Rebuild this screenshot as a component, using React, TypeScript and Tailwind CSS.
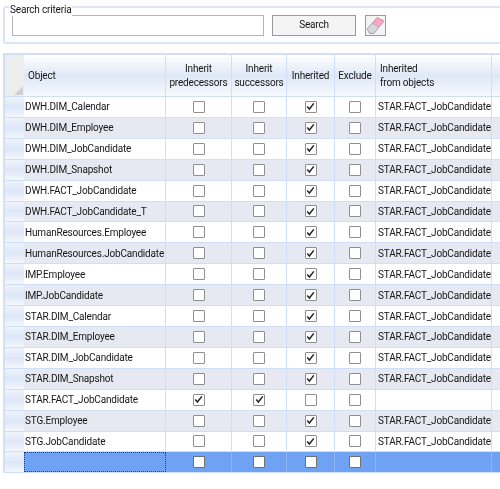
const names = [
  "DWH.DIM_Calendar", "DWH.DIM_Employee", "DWH.DIM_JobCandidate", "DWH.DIM_Snapshot",
  "DWH.FACT_JobCandidate", "DWH.FACT_JobCandidate_T", "HumanResources.Employee", "HumanResources.JobCandidate",
  "IMP.Employee", "IMP.JobCandidate", "STAR.DIM_Calendar", "STAR.DIM_Employee",
  "STAR.DIM_JobCandidate", "STAR.DIM_Snapshot", "STAR.FACT_JobCandidate", "STG.Employee", "STG.JobCandidate",
];

const COLS = "grid grid-cols-[19px_142px_66px_55px_48px_41px_116px_1fr]";

function Check({ on, sel }: { on?: boolean; sel?: boolean }) {
  return (
    <span className={`flex h-[12px] w-[12px] items-center justify-center rounded-[1px] border bg-white ${sel ? "border-[#6b6f78]" : "border-[#8f8f8f]"}`}>
      {on && (
        <svg width="9" height="9" viewBox="0 0 9 9" fill="none">
          <path d="M1.2 4.6 L3.4 7 L7.8 1.4" stroke="#222" strokeWidth="1.5" />
        </svg>
      )}
    </span>
  );
}

function BoxCell({ on, sel }: { on?: boolean; sel?: boolean }) {
  return (
    <div className={`flex items-center justify-center border-r ${sel ? "border-[#8db6f3]" : "border-[#cfdff8]"}`}>
      <Check on={on} sel={sel} />
    </div>
  );
}

function Row({ name, index }: { name: string; index: number }) {
  const self = name === "STAR.FACT_JobCandidate";
  return (
    <div className={`${COLS} h-[20.92px] border-b border-[#cfdff8] ${index % 2 ? "bg-[#e6e9f2]" : "bg-white"}`}>
      <div className="bg-gradient-to-b from-[#eef3fb] via-[#dde7f7] to-[#f4f7fc]" />
      <div className="flex items-center whitespace-nowrap border-r border-[#cfdff8] pl-[1px] pt-[1px]">{name}</div>
      <BoxCell on={self} />
      <BoxCell on={self} />
      <BoxCell on={!self} />
      <BoxCell />
      <div className="flex items-center whitespace-nowrap border-r border-[#cfdff8] pl-[2px] pt-[1px]">{self ? "" : "STAR.FACT_JobCandidate"}</div>
      <div />
    </div>
  );
}

export default function App() {
  return (
    <div className="relative h-[489px] w-[500px] overflow-hidden bg-white font-['Roboto','Noto_Sans',sans-serif] text-[10px] leading-none tracking-[-0.18px] text-[#161616] blur-[0.3px]">
      <div className="pl-[3px] pt-[6px]">
        <div className="relative flex h-[38px] items-center rounded-l-[3px] border-y-2 border-l-2 border-[#dbe5f8] pl-[7px]">
          <span className="absolute -top-[4px] left-[4px] bg-white px-[1px] leading-[12px]">Search criteria</span>
          <div className="h-[21px] w-[252px] border border-[#b4b4b4] bg-white" />
          <button className="ml-[8px] h-[21px] w-[84px] border border-[#9a9a9a] bg-[#f4f4f4]">Search</button>
          <button className="ml-[9px] flex h-[21px] w-[21px] items-center justify-center border border-[#9a9a9a] bg-[#f4f4f4]">
            <svg width="19" height="19" viewBox="0 0 17 17">
              <path d="M1 11.5 L10 1.5 L16 4.5 L7 15.8 L3 15.5 Z" fill="#d6d6d6" stroke="#9c9c9c" strokeWidth="0.8" />
              <path d="M5.6 6.4 L10 1.5 L16 4.5 L11.6 10 Z" fill="#f2a8c6" stroke="#d987ab" strokeWidth="0.5" />
            </svg>
          </button>
        </div>
      </div>
      <div className="ml-[3px] mt-[9px] border-l-2 border-t-2 border-[#d3e1f8]">
        <div className={`${COLS} h-[42px] border-b border-[#cfdff8] bg-gradient-to-b from-white via-[#dfe8f7] to-[#f6f9fd]`}>
          <div className="relative bg-[#eeeeee]">
            <svg className="absolute bottom-[1px] right-[1px]" width="9" height="9" viewBox="0 0 9 9"><path d="M9 0 V9 H0 Z" fill="#cfcfcf" /></svg>
          </div>
          <div className="flex items-center border-r border-[#cfdff8] pl-[4px] pt-[1px]">Object</div>
          <div className="flex items-center justify-center border-r border-[#cfdff8] pt-[1px] text-center leading-[13.7px]">Inherit<br />predecessors</div>
          <div className="flex items-center justify-center border-r border-[#cfdff8] pt-[1px] text-center leading-[13.7px]">Inherit<br />successors</div>
          <div className="flex items-center justify-center border-r border-[#cfdff8] pt-[1px]">Inherited</div>
          <div className="flex items-center justify-center border-r border-[#cfdff8] pt-[1px]">Exclude</div>
          <div className="flex items-center border-r border-[#cfdff8] pl-[4px] pt-[1px] leading-[13.7px]">Inherited<br />from objects</div>
          <div />
        </div>
        {names.map((n, i) => <Row key={n} name={n} index={i} />)}
        <div className={`${COLS} h-[20.92px] border-b border-[#cfdff8] bg-[#6fa2f2]`}>
          <div className="bg-gradient-to-b from-[#eef3fb] via-[#dde7f7] to-[#f4f7fc]" />
          <div className="border border-dotted border-[#27406b]" />
          <BoxCell sel />
          <BoxCell sel />
          <BoxCell sel />
          <BoxCell sel />
          <div className="border-r border-[#8db6f3]" />
          <div />
        </div>
      </div>
    </div>
  );
}
